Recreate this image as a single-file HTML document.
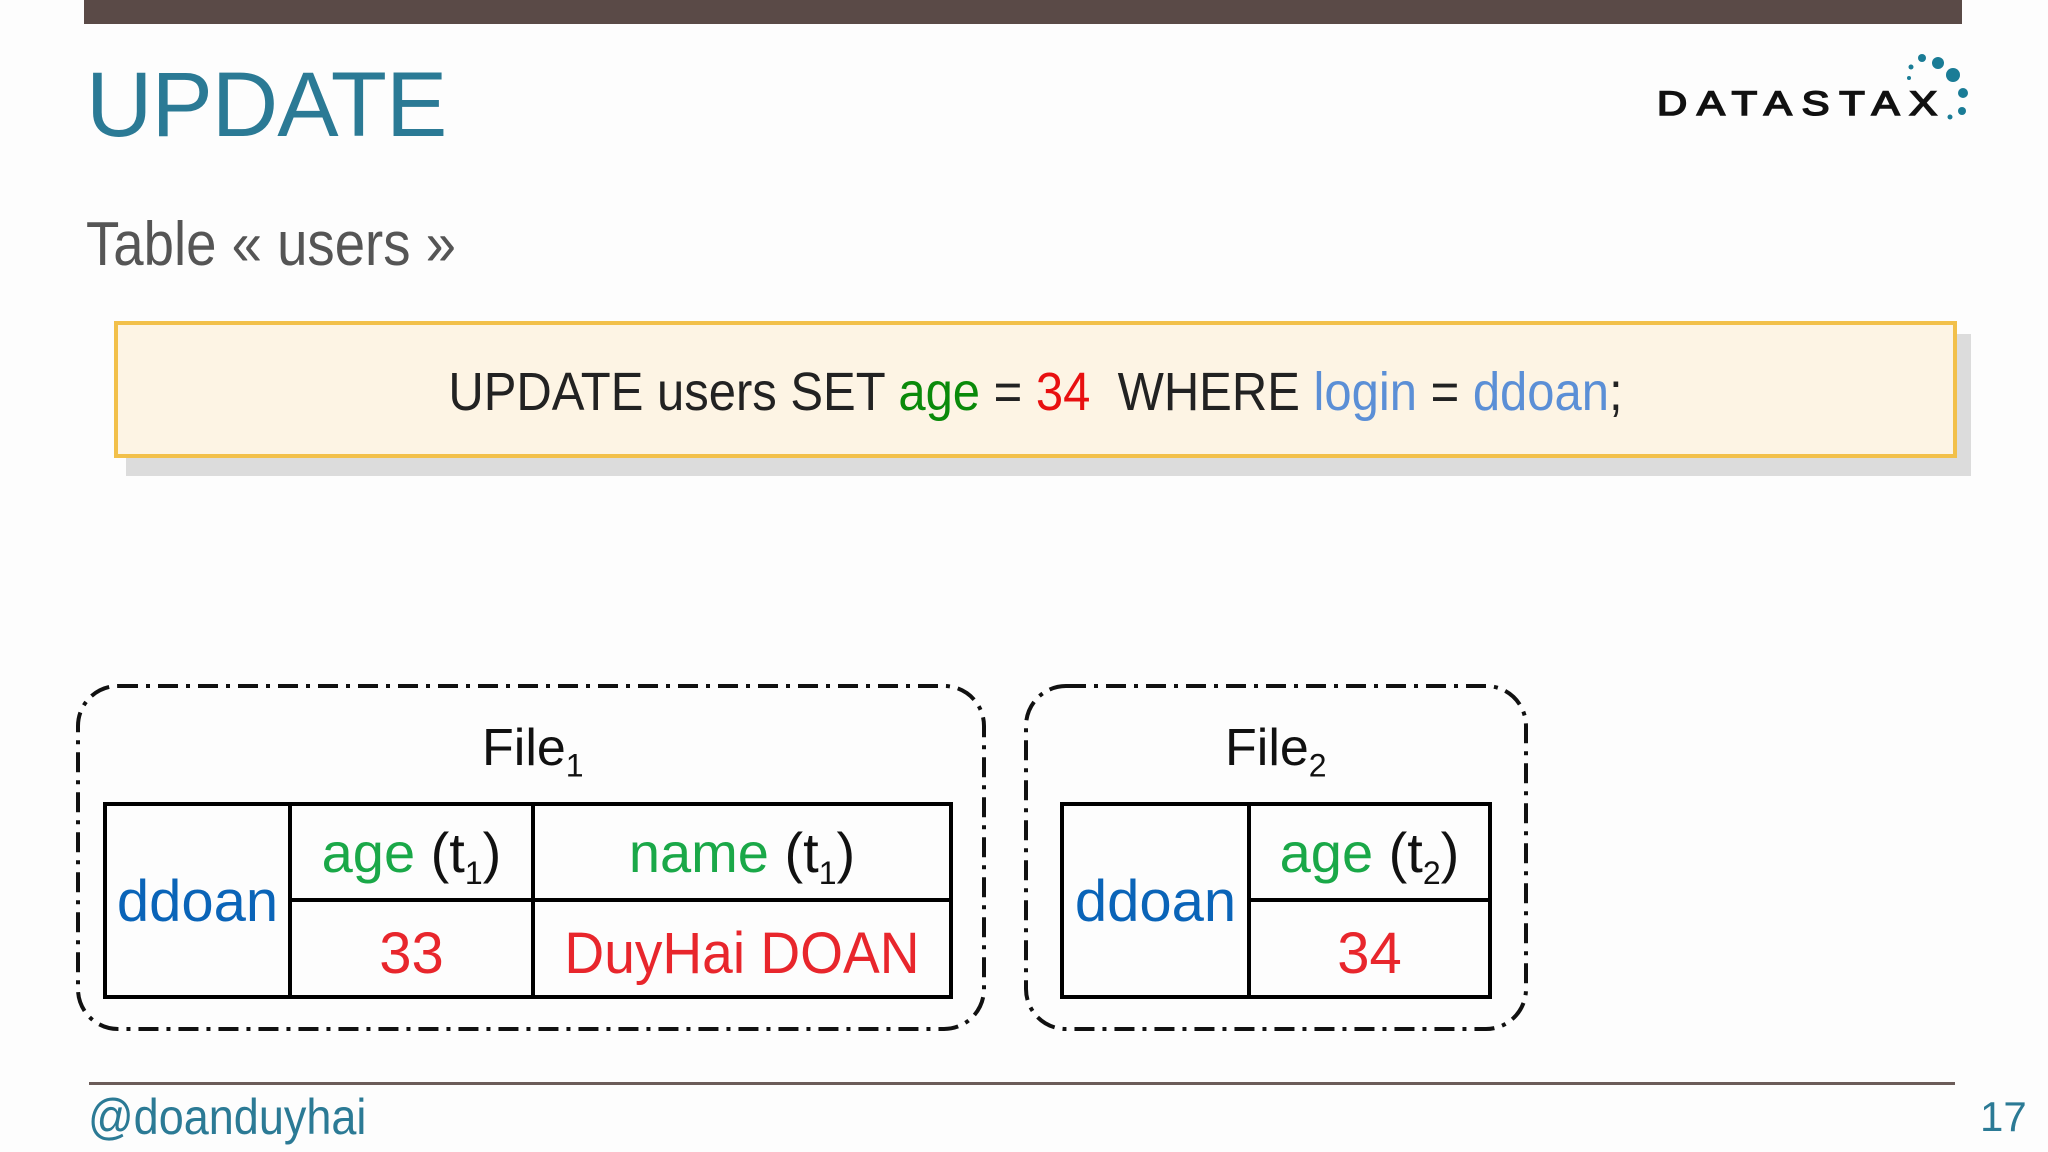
<!DOCTYPE html>
<html><head><meta charset="utf-8"><style>
html,body{margin:0;padding:0}
body{width:2048px;height:1152px;background:#fdfdfd;position:relative;overflow:hidden;font-family:"Liberation Sans",sans-serif}
.a{position:absolute;white-space:nowrap}
</style></head><body>
<div class="a" style="left:84px;top:0;width:1878px;height:24px;background:#5a4a47"></div>
<div class="a" style="left:86px;top:59px;font-size:92px;color:#2b7a95;line-height:1;letter-spacing:-1px">UPDATE</div>
<svg class="a" style="left:1640px;top:40px" width="360" height="100">
<text x="17" y="75" font-family="Liberation Sans" font-size="34" fill="#111" stroke="#111" stroke-width="1.6" letter-spacing="8" textLength="290" lengthAdjust="spacingAndGlyphs">DATASTAX</text>
<g fill="#1a7c96"><circle cx="282" cy="18" r="4"/><circle cx="298" cy="23" r="6"/><circle cx="313" cy="35" r="7"/><circle cx="323" cy="53" r="5"/><circle cx="322" cy="71" r="4"/><circle cx="310" cy="77" r="2.5"/><circle cx="271" cy="27" r="2.5"/><circle cx="269" cy="38" r="2"/></g>
</svg>
<div class="a" style="left:86px;top:214px;font-size:62px;color:#555;line-height:1;transform:scaleX(0.88);transform-origin:0 0">Table « users »</div>
<div class="a" style="left:126px;top:334px;width:1845px;height:142px;background:#dcdcdc"></div>
<div class="a" style="left:114px;top:321px;width:1835px;height:129px;background:#fdf4e4;border:4px solid #f2c04a"></div>
<div class="a" style="left:114px;top:362px;width:1843px;text-align:center;font-size:54px;line-height:60px;color:#222;transform:scaleX(0.907);transform-origin:50% 0">UPDATE users SET <span style="color:#0a8a0a">age</span> = <span style="color:#e81010">34</span>&nbsp; WHERE <span style="color:#5b8fd6">login</span> = <span style="color:#5b8fd6">ddoan</span>;</div>

<svg class="a" style="left:0;top:0" width="2048" height="1152">
<g fill="none" stroke="#111" stroke-width="4" stroke-dasharray="20,8,4,8">
<rect x="78" y="686" width="906" height="343" rx="40"/>
<rect x="1026" y="686" width="500" height="343" rx="40"/>
</g>
<g fill="none" stroke="#000" stroke-width="4">
<rect x="105" y="804" width="846" height="193"/>
<line x1="290" y1="804" x2="290" y2="997"/><line x1="533" y1="804" x2="533" y2="997"/><line x1="290" y1="900" x2="951" y2="900"/>
<rect x="1062" y="804" width="428" height="193"/>
<line x1="1249" y1="804" x2="1249" y2="997"/><line x1="1249" y1="900" x2="1490" y2="900"/>
</g>
</svg>
<div class="a" style="left:482px;top:718px;font-size:52px;color:#111">File<sub style="font-size:32px">1</sub></div>
<div class="a" style="left:1225px;top:718px;font-size:52px;color:#111">File<sub style="font-size:32px">2</sub></div>
<div class="a" style="left:105px;top:868px;width:185px;text-align:center;font-size:58px;color:#0a64b8">ddoan</div>
<div class="a" style="left:1062px;top:868px;width:187px;text-align:center;font-size:58px;color:#0a64b8">ddoan</div>
<div class="a" style="left:290px;top:820px;width:243px;text-align:center;font-size:56px;color:#1aa848">age <span style="color:#111">(t<sub style="font-size:32px">1</sub>)</span></div>
<div class="a" style="left:533px;top:820px;width:418px;text-align:center;font-size:56px;color:#1aa848">name <span style="color:#111">(t<sub style="font-size:32px">1</sub>)</span></div>
<div class="a" style="left:1249px;top:820px;width:241px;text-align:center;font-size:56px;color:#1aa848">age <span style="color:#111">(t<sub style="font-size:32px">2</sub>)</span></div>
<div class="a" style="left:290px;top:920px;width:243px;text-align:center;font-size:58px;color:#e8262c">33</div>
<div class="a" style="left:533px;top:920px;width:418px;text-align:center;font-size:58px;color:#e8262c;transform:scaleX(0.95)">DuyHai DOAN</div>
<div class="a" style="left:1249px;top:920px;width:241px;text-align:center;font-size:58px;color:#e8262c">34</div>
<div class="a" style="left:89px;top:1082px;width:1866px;height:3px;background:#6b5c59"></div>
<div class="a" style="left:88px;top:1088px;font-size:50px;color:#2b7a95;transform:scaleX(0.9);transform-origin:0 0">@doanduyhai</div>
<div class="a" style="left:1980px;top:1093px;font-size:42px;color:#2b7a95">17</div>
</body></html>
